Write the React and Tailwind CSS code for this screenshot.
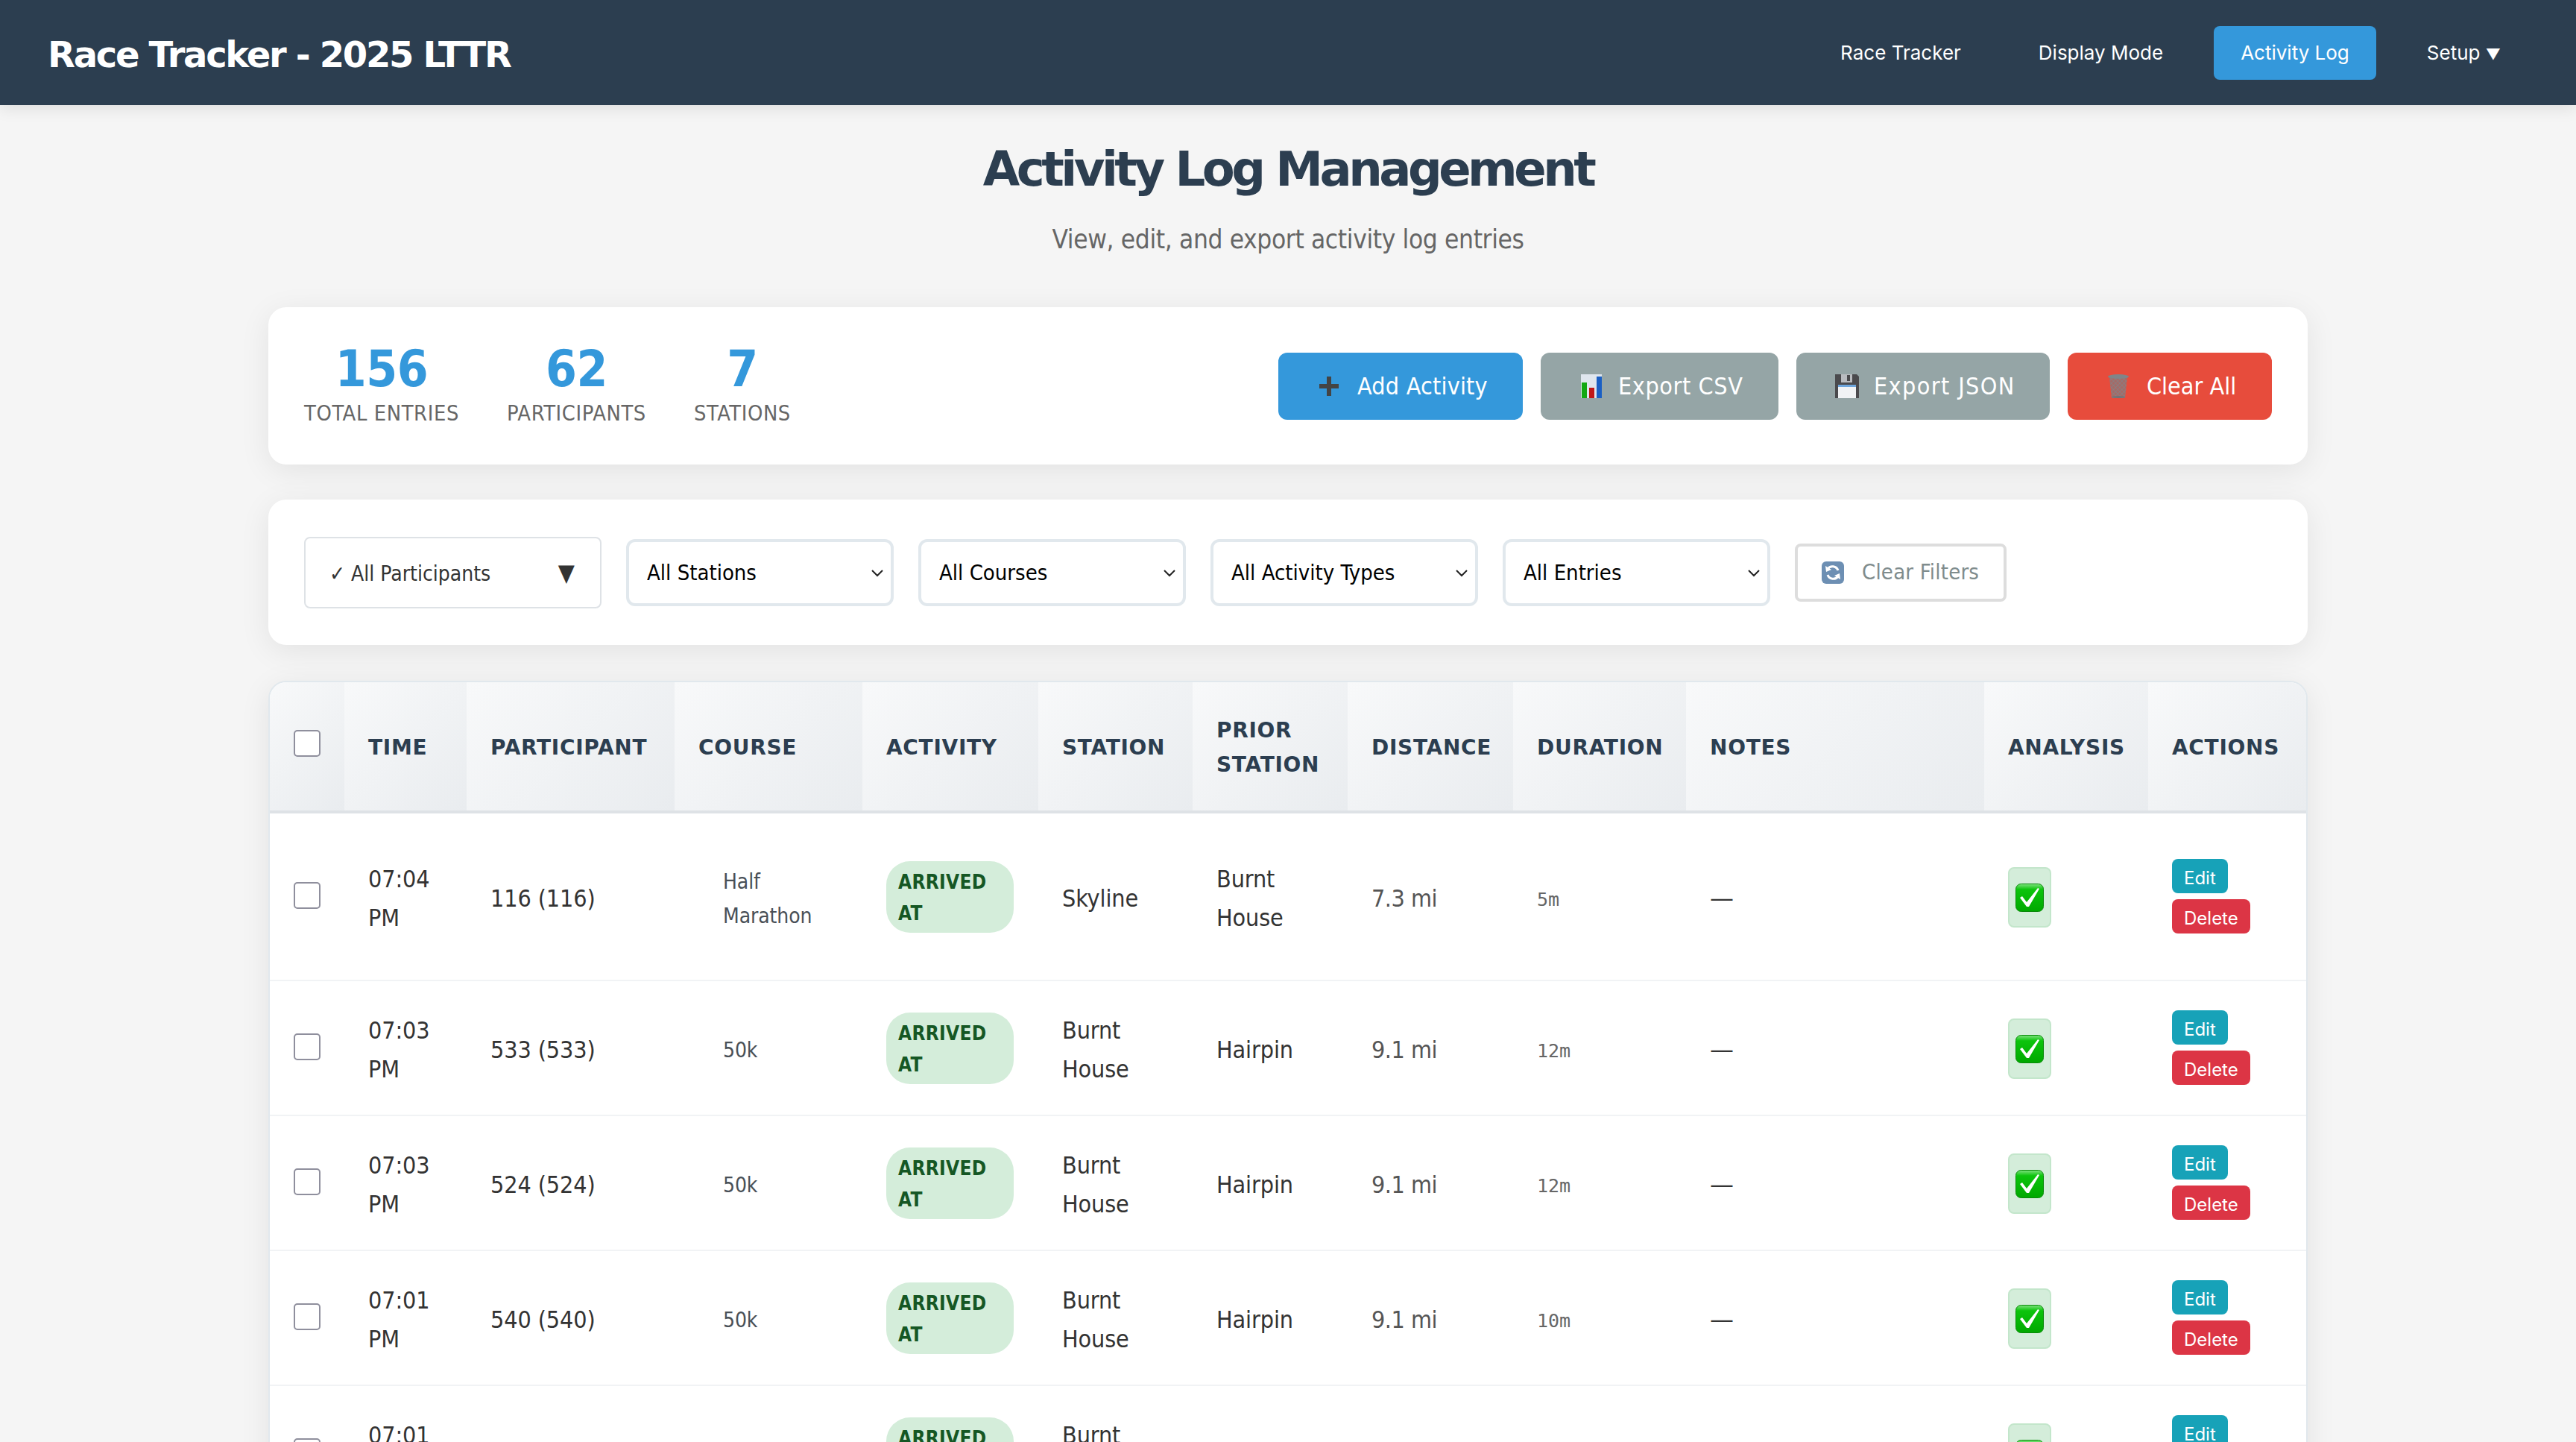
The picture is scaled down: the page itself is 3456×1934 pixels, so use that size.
import React from "react";

const base = "[font-family:'DejaVu_Sans_Condensed','DejaVu_Sans',sans-serif]";
const wide = "[font-family:'DejaVu_Sans',sans-serif]";
const inter = "[font-family:Inter,sans-serif]";

const rows = [
  { t: "07:04 PM", p: "116 (116)", c: "Half Marathon", s: "Skyline", ps: "Burnt House", d: "7.3 mi", du: "5m", h: "h-[225px]" },
  { t: "07:03 PM", p: "533 (533)", c: "50k", s: "Burnt House", ps: "Hairpin", d: "9.1 mi", du: "12m", h: "h-[181px]" },
  { t: "07:03 PM", p: "524 (524)", c: "50k", s: "Burnt House", ps: "Hairpin", d: "9.1 mi", du: "12m", h: "h-[181px]" },
  { t: "07:01 PM", p: "540 (540)", c: "50k", s: "Burnt House", ps: "Hairpin", d: "9.1 mi", du: "10m", h: "h-[181px]" },
  { t: "07:01 PM", p: "527 (527)", c: "50k", s: "Burnt House", ps: "Hairpin", d: "9.1 mi", du: "10m", h: "h-[181px]" },
];

function Check() {
  return (
    <svg width="38" height="38" viewBox="0 0 38 38" className="block">
      <defs>
        <linearGradient id="gc" x1="0" y1="0" x2="0" y2="1">
          <stop offset="0" stopColor="#7fe27f" />
          <stop offset="0.2" stopColor="#0cc40c" />
          <stop offset="1" stopColor="#00a800" />
        </linearGradient>
      </defs>
      <rect x="0.5" y="0.5" width="37" height="37" rx="7" fill="url(#gc)" stroke="#0a8a0a" />
      <path d="M6 19l3-2 6 8L30 6l2 1-14 24h-3z" fill="#fff" />
    </svg>
  );
}

function Plus() {
  return (
    <svg width="26" height="26" viewBox="0 0 26 26" className="block">
      <path d="M10 0h6v10h10v6H16v10h-6V16H0v-6h10z" fill="#444" />
    </svg>
  );
}

function Bars() {
  return (
    <svg width="28" height="32" viewBox="0 0 28 32" className="block">
      <rect width="28" height="32" fill="#dfe6ee" />
      <rect x="1" y="11" width="7" height="21" fill="#12a812" />
      <rect x="11" y="18" width="7" height="14" fill="#c01818" />
      <rect x="21" y="3" width="7" height="29" fill="#1a5fc4" />
    </svg>
  );
}

function Floppy() {
  return (
    <svg width="32" height="32" viewBox="0 0 32 32" className="block">
      <path d="M0 0h29l3 3v29H0z" fill="#4a4a4d" />
      <rect x="8" y="0" width="15" height="11" fill="#b9bcc0" />
      <rect x="16" y="1" width="4" height="8" fill="#4a4a4d" />
      <rect x="4" y="14" width="24" height="18" fill="#f1f3f5" />
      <rect x="4" y="14" width="24" height="3" fill="#6ea6dd" />
    </svg>
  );
}

function Trash() {
  return (
    <svg width="30" height="32" viewBox="0 0 30 32" className="block">
      <defs>
        <pattern id="mesh" width="4" height="4" patternUnits="userSpaceOnUse" patternTransform="rotate(45)">
          <rect width="4" height="4" fill="#a56a66" />
          <path d="M0 0h4M0 0v4" stroke="#7b8a92" strokeWidth="1" />
        </pattern>
      </defs>
      <path d="M3 4h24l-3 28H6z" fill="url(#mesh)" />
      <ellipse cx="15" cy="3" rx="14" ry="3" fill="#7f8589" />
      <ellipse cx="15" cy="30.5" rx="9" ry="1.5" fill="#6f7478" />
    </svg>
  );
}

function Refresh() {
  return (
    <svg width="30" height="30" viewBox="0 0 30 30" className="block">
      <rect width="30" height="30" rx="6" fill="#6d8fb3" />
      <path d="M22 12a8 8 0 0 0-14-2" fill="none" stroke="#fff" strokeWidth="3" />
      <path d="M8 18a8 8 0 0 0 14 2" fill="none" stroke="#fff" strokeWidth="3" />
      <path d="M5 6l1 8 7-3zM25 24l-1-8-7 3z" fill="#fff" />
    </svg>
  );
}

function Btn({ icon, label, color, w, track, gap }) {
  return (
    <button className={`flex h-[90px] items-center rounded-[12px] pl-[48px] text-[32px] text-white ${gap} ${color} ${w} ${track}`}>
      <span className="flex w-[40px] justify-center">{icon}</span>
      {label}
    </button>
  );
}

function Sel({ label }) {
  return (
    <div className="relative">
      <select className="h-[90px] w-[359px] appearance-none rounded-[12px] border-4 border-[#e1e8ed] bg-white pt-[2px] pl-[24px] text-[29px] text-black">
        <option>{label}</option>
      </select>
      <svg width="16" height="10" viewBox="0 0 16 10" className="absolute right-[14px] top-[41px]">
        <path d="M1 1l7 7 7-7" fill="none" stroke="#222" strokeWidth="2" />
      </svg>
    </div>
  );
}

function Box({ lift }) {
  return <input type="checkbox" className={`block h-[36px] w-[36px] appearance-none rounded-[5px] border-2 border-[#8f8f9d] bg-white ${lift}`} />;
}

function Stat({ n, l }) {
  return (
    <div className="flex flex-col items-center">
      <div className="-translate-y-1 text-[67px] leading-[76px] font-bold tracking-[-0.5px] text-[#3498db]">{n}</div>
      <div className="-translate-y-[2px] text-[28.8px] leading-[38px] tracking-[0.6px] text-[#666] uppercase">{l}</div>
    </div>
  );
}

const th = `bg-[linear-gradient(135deg,#f8f9fa,#e9ecef)] border-b-4 border-[#dee2e6] px-8 pt-[3px] text-left align-middle text-[28px] leading-[46px] font-bold tracking-[0.7px] text-[#2c3e50] uppercase ${wide}`;
const td = "border-b-2 border-[#f1f3f5] px-8 pt-[6px] align-middle text-[32px] leading-[51.2px] tracking-[-0.1px] text-[#333]";

export default function App() {
  return (
    <div className={`h-screen overflow-hidden bg-[#f5f5f5] ${base}`}>
      <header className="flex h-[141px] items-center justify-between bg-[#2c3e50] pr-[65px] pl-[64px] shadow-[0_4px_20px_rgba(0,0,0,0.1)]">
        <div className={`pt-[5px] text-[48px] font-bold tracking-[-2.3px] text-white ${wide}`}>Race Tracker - 2025 LTTR</div>
        <nav className={`flex items-center gap-8 text-[26px] text-white ${inter}`}>
          <a className="px-9 py-5">Race Tracker</a>
          <a className="px-9 py-5">Display Mode</a>
          <a className="flex h-[72px] items-center rounded-[8px] bg-[#3498db] px-9">Activity Log</a>
          <a className="px-9 py-5">Setup <span className="text-[20px]">▼</span></a>
        </nav>
      </header>

      <main className="mx-auto w-[2736px]">
        <div className="pt-[48px] text-center">
          <h1 className={`text-[64px] leading-[76px] font-bold tracking-[-4.5px] text-[#2c3e50] ${wide}`}>Activity Log Management</h1>
          <p className="mt-[34px] text-[35px] leading-[44px] tracking-[-0.38px] text-[#666]">View, edit, and export activity log entries</p>
        </div>

        <section className="mt-[69px] flex h-[211px] items-center justify-between rounded-[24px] bg-white px-12 shadow-[0_8px_40px_rgba(0,0,0,0.08)]">
          <div className="flex gap-[64px]">
            <Stat n="156" l="Total Entries" />
            <Stat n="62" l="Participants" />
            <Stat n="7" l="Stations" />
          </div>
          <div className="flex gap-6">
            <Btn icon={<Plus />} label="Add Activity" color="bg-[#3498db]" w="w-[328px]" track="tracking-[0.2px]" gap="gap-[18px]" />
            <Btn icon={<Bars />} label="Export CSV" color="bg-[#95a5a6]" w="w-[319px]" track="tracking-[0.6px]" gap="gap-[16px]" />
            <Btn icon={<Floppy />} label="Export JSON" color="bg-[#95a5a6]" w="w-[340px]" track="tracking-[1.4px]" gap="gap-[16px]" />
            <Btn icon={<Trash />} label="Clear All" color="bg-[#e74c3c]" w="w-[274px]" track="tracking-[0px]" gap="gap-[18px]" />
          </div>
        </section>

        <section className="mt-[47px] flex h-[195px] items-center gap-[33px] rounded-[24px] bg-white px-12 shadow-[0_8px_40px_rgba(0,0,0,0.08)]">
          <div className="flex h-[96px] w-[399px] items-center justify-between rounded-[8px] border-2 border-[#dee2e6] pr-[34px] pl-[32px] text-[28px] text-[#333]">
            <span className="pt-[4px]">✓ All Participants</span>
            <span className="text-[32px]">▼</span>
          </div>
          <Sel label="All Stations" />
          <Sel label="All Courses" />
          <Sel label="All Activity Types" />
          <Sel label="All Entries" />
          <button className="flex h-[78px] w-[284px] items-center gap-[24px] rounded-[8px] border-4 border-[#ddd] bg-white pl-[32px] text-[29px] tracking-[0.2px] text-[#7f8c8d]">
            <Refresh />
            Clear Filters
          </button>
        </section>

        <section className="mt-[48px] overflow-hidden rounded-[24px] border-2 border-[#e1e8ed] bg-white shadow-[0_8px_40px_rgba(0,0,0,0.08)]">
          <table className="w-full table-fixed border-separate border-spacing-0">
            <colgroup>
              <col className="w-[100px]" />
              <col className="w-[164px]" />
              <col className="w-[279px]" />
              <col className="w-[252px]" />
              <col className="w-[236px]" />
              <col className="w-[207px]" />
              <col className="w-[208px]" />
              <col className="w-[222px]" />
              <col className="w-[232px]" />
              <col className="w-[400px]" />
              <col className="w-[220px]" />
              <col className="w-[212px]" />
            </colgroup>
            <thead>
              <tr className="h-[176px]">
                <th className={th}><Box lift="-translate-y-[6px]" /></th>
                <th className={th}>Time</th>
                <th className={th}>Participant</th>
                <th className={th}>Course</th>
                <th className={th}>Activity</th>
                <th className={th}>Station</th>
                <th className={th}>Prior Station</th>
                <th className={th}>Distance</th>
                <th className={th}>Duration</th>
                <th className={th}>Notes</th>
                <th className={th}>Analysis</th>
                <th className={th}>Actions</th>
              </tr>
            </thead>
            <tbody>
              {rows.map((r) => (
                <tr key={r.p} className={r.h}>
                  <td className={td}><Box lift="-translate-y-[5px]" /></td>
                  <td className={td}><span className="block w-min">{r.t}</span></td>
                  <td className={td}>{r.p}</td>
                  <td className={td}>
                    <span className="block w-min pl-[33px] text-[28px] leading-[46px] text-[#495057]">{r.c}</span>
                  </td>
                  <td className={td}>
                    <span className="block w-[171px] -translate-y-[3px] rounded-[32px] bg-[#d4edda] px-4 pt-[7px] pb-[5px] text-[26px] leading-[42px] font-bold tracking-[0.3px] text-[#155724] uppercase">Arrived At</span>
                  </td>
                  <td className={td}><span className="block w-min">{r.s}</span></td>
                  <td className={td}><span className="block w-min">{r.ps}</span></td>
                  <td className={td}><span className="tracking-[-0.5px] text-[#555]">{r.d}</span></td>
                  <td className={td}><span className="text-[25px] tracking-[0px] text-[#666] [font-family:'DejaVu_Sans_Mono',monospace]">{r.du}</span></td>
                  <td className={td}><span className={wide}>—</span></td>
                  <td className={td}>
                    <span className="flex h-[81px] w-[58px] -translate-y-[2px] items-center justify-center rounded-[8px] border-2 border-[#c3e6cb] bg-[#d4edda]"><Check /></span>
                  </td>
                  <td className={td}>
                    <div className={`flex -translate-y-[4px] flex-col items-start gap-2 text-[24px] tracking-normal text-white ${inter}`}>
                      <button className="h-[46px] rounded-[8px] bg-[#17a2b8] px-4">Edit</button>
                      <button className="h-[46px] rounded-[8px] bg-[#dc3545] px-4">Delete</button>
                    </div>
                  </td>
                </tr>
              ))}
            </tbody>
          </table>
        </section>
      </main>
    </div>
  );
}
